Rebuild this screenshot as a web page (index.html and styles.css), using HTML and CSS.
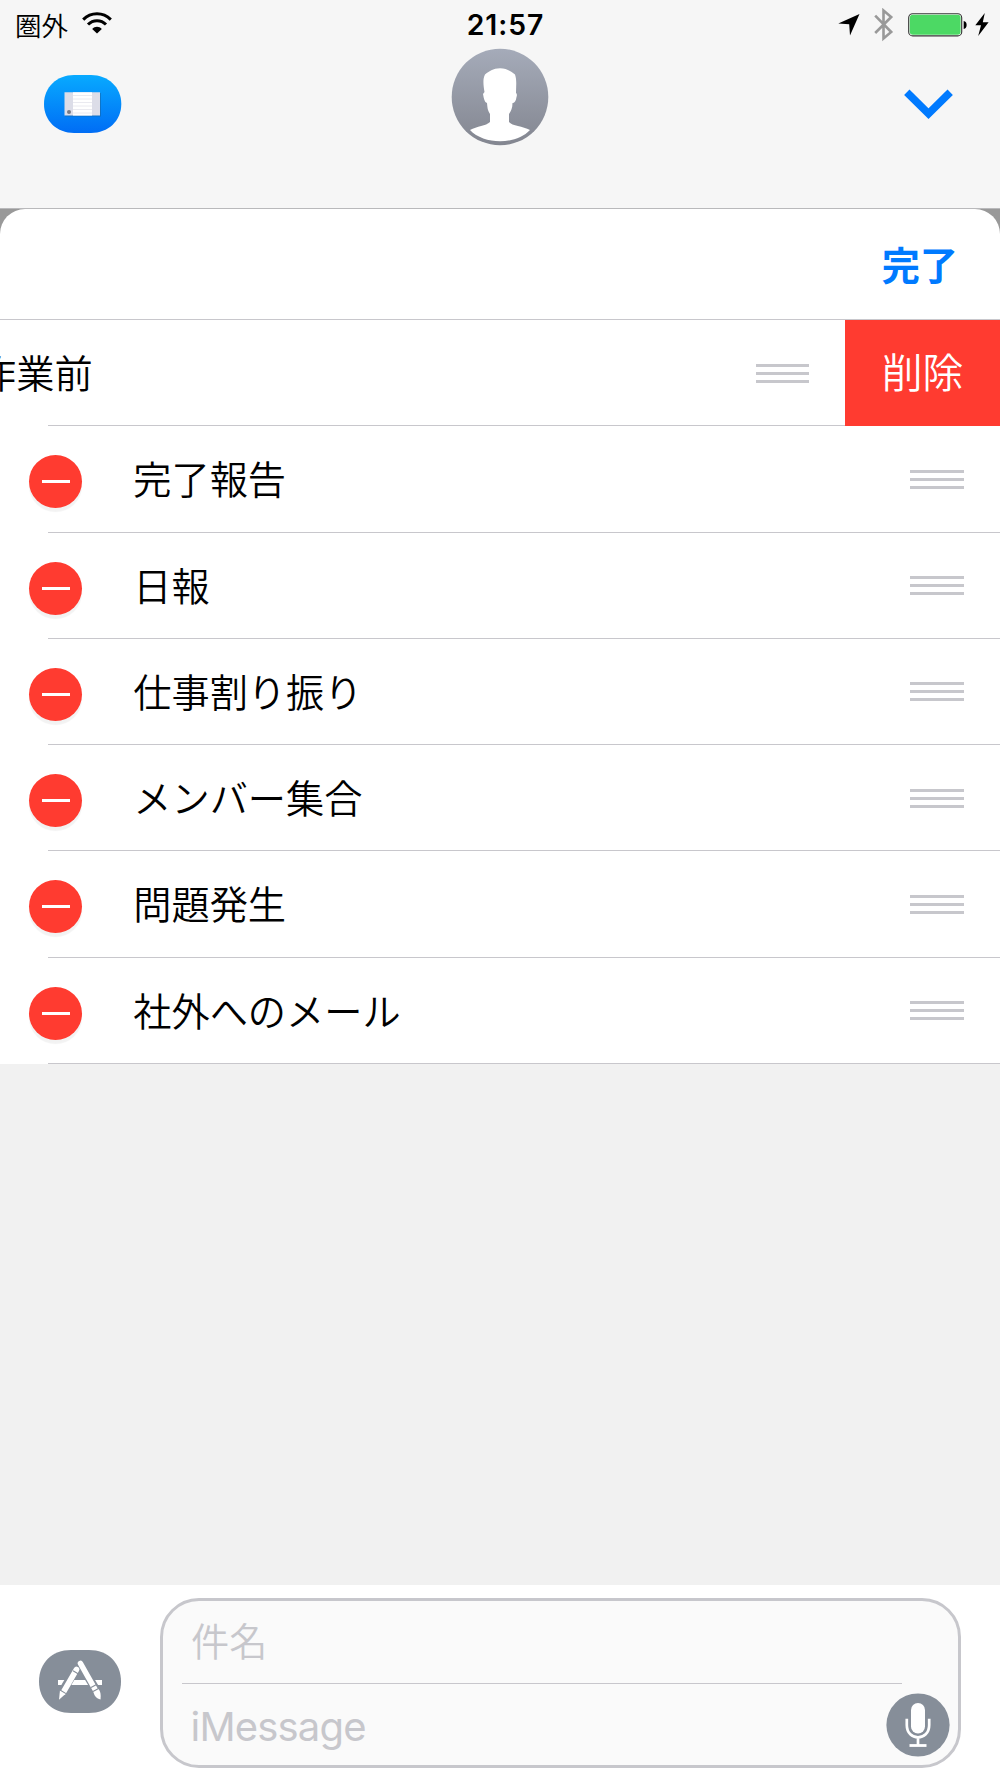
FILE: index.html
```html
<!DOCTYPE html>
<html lang="ja">
<head>
<meta charset="utf-8">
<title>iMessage</title>
<link rel="stylesheet" href="styles.css">
</head>
<body>
<div class="screen">
  <header class="top">
    <div class="status">
      <div class="status-left">
        <span class="carrier">圏外</span>
        <svg class="wifi" width="30" height="22" viewBox="0 0 30 22"><g fill="none" stroke="#000" stroke-width="3"><path d="M1.2 7.6C9-.2 21-.2 28.8 7.6"/><path d="M6 12.5C11 7.4 19 7.4 24 12.5"/></g><path d="M10.200 17C12.800 14.100 17.200 14.100 19.800 17L15 21.600Z"/></svg>
      </div>
      <span class="time">21:57</span>
      <div class="status-right">
        <svg class="location" width="22" height="22" viewBox="0 0 22 22"><path d="M21.500 0L.3 9.600 11.200 10.300 12 21.500Z"/></svg>
        <svg class="bluetooth" width="20" height="34" viewBox="0 0 20 34"><path d="M1.200 7.600L17.200 24 9.500 30.500V2.500L17.200 9 1.200 25" fill="none" stroke="#999" stroke-width="2.600"/></svg>
        <svg class="battery" width="59" height="24" viewBox="0 0 59 24"><rect x=".7" y=".7" width="53" height="22.200" rx="4" fill="#fff" stroke="#333" stroke-width="1.100"/><rect x="1.800" y="1.800" width="50.800" height="20" rx="3" fill="#4cd964"/><path d="M55.700 8C59.600 8.300 59.600 15.700 55.700 16Z"/></svg>
        <svg class="bolt" width="14" height="23" viewBox="0 0 14 23"><path d="M9.800 0L.3 12.300H6L3.200 23 13.600 9.200H7.800Z"/></svg>
      </div>
    </div>
    <div class="nav">
      <div class="app-pill">
        <svg width="78" height="58" viewBox="0 0 78 58"><defs><linearGradient id="blue" x2="0" y2="1"><stop stop-color="#08aaff"/><stop offset="1" stop-color="#006df5"/></linearGradient></defs><path d="M0 29C0 12 13 0 30 0H47C64 0 77.300 12 77.300 29S64 58 47 58H30C13 58 0 46 0 29Z" fill="url(#blue)"/><path d="M21 18H57V41.500H21Z" fill="#17629f" opacity=".55"/><path d="M20.500 17.300H56V40.500H20.500Z" fill="#dcdde8"/><path d="M29 17.300H48V40.500H29Z" fill="#fff"/><path d="M29 20.500H48M29 24H48M29 27.500H48M29 31H48M29 34.500H48M29 38H48" stroke="#eaeaf0"/><circle cx="25" cy="37" r="2" fill="#777a85"/></svg>
      </div>
      <svg class="avatar" width="98" height="98" viewBox="0 0 98 98"><defs><linearGradient id="grey" x2="0" y2="1"><stop stop-color="#a5abb9"/><stop offset="1" stop-color="#838690"/></linearGradient></defs><circle cx="49" cy="49" r="48.300" fill="url(#grey)"/><path d="M49 20.300C56 20.300 60 23.500 64 26.500C66 32 65 39 65 45Q66.500 46 65.500 49C65 53 63.500 55 61.500 55C61.500 60 60 63 58 66V74C61 78 72 78 79 82C65 97 33 97 19 82C26 78 35 78 39 74V66C36.500 62 36.500 60 36 55C33.500 54 33 51 32 46L33.500 44C32.500 38 31.500 31 34 26.500C38 23.500 42 20.300 49 20.300Z" fill="#fff"/></svg>
      <svg class="chevron" width="50" height="32" viewBox="0 0 50 32"><path d="M2.800 3.200L24.500 24.700 46.200 3.200" fill="none" stroke="#007aff" stroke-width="7.600"/></svg>
    </div>
  </header>

  <main class="stage">
    <section class="sheet">
      <div class="toolbar"><span class="done">完了</span></div>
      <div class="row swiped">
        <span class="label">作業前</span>
        <span class="grip"><i></i><i></i><i></i></span>
        <span class="delete"><span>削除</span></span>
      </div>
      <div class="row"><span class="minus"></span><span class="label">完了報告</span><span class="grip"><i></i><i></i><i></i></span></div>
      <div class="row"><span class="minus"></span><span class="label">日報</span><span class="grip"><i></i><i></i><i></i></span></div>
      <div class="row"><span class="minus"></span><span class="label">仕事割り振り</span><span class="grip"><i></i><i></i><i></i></span></div>
      <div class="row"><span class="minus"></span><span class="label">メンバー集合</span><span class="grip"><i></i><i></i><i></i></span></div>
      <div class="row"><span class="minus"></span><span class="label">問題発生</span><span class="grip"><i></i><i></i><i></i></span></div>
      <div class="row"><span class="minus"></span><span class="label">社外へのメール</span><span class="grip"><i></i><i></i><i></i></span></div>
    </section>
  </main>

  <footer class="composer">
    <svg class="apps" width="83" height="63" viewBox="0 0 83 63"><path d="M0 31.500C0 13 13 0 32 0H50C69 0 82 13 82 31.500S69 63 50 63H32C13 63 0 50 0 31.500Z" fill="#868e99"/><path d="M19 32.500H63" stroke="#fff" stroke-width="5.200"/><g stroke="#868e99" stroke-width="8.500"><path d="M38 17L22 44"/><path d="M41 13L60 45"/></g><g stroke="#fff" stroke-width="5.600"><path d="M37.500 19.500L24.500 42" stroke-linecap="round"/><path d="M41.500 13.500L57 41" stroke-linecap="round"/></g><path d="M21 40L27 43.500 20 49.800Z" fill="#fff"/><path d="M54.500 41.500L59.500 39C62 42 61.800 46 61.500 49.500C57.500 48.500 55 46 54.500 41.500Z" fill="#fff"/><path d="M34 20.800L39.500 24M21 40L27 43.600M52 37.500L58 34.200M54 41.500L60 38.200" stroke="#868e99" stroke-width="1.100"/></svg>
    <div class="field">
      <div class="subject">件名</div>
      <div class="message"><span>iMessage</span>
        <svg class="mic" width="64" height="64" viewBox="0 0 64 64"><circle cx="32" cy="32" r="31.600" fill="#868e99"/><rect x="25" y="10" width="14" height="30.500" rx="7" fill="#fff"/><path d="M20.800 25.800V32C20.800 48.500 43.200 48.500 43.200 32V25.800M32 44V53" fill="none" stroke="#fff" stroke-width="2.700"/><path d="M23.500 52.500H40.500" stroke="#fff" stroke-width="2.800"/></svg>
      </div>
    </div>
  </footer>
</div>
</body>
</html>
```
FILE: styles.css
```css
* { box-sizing: border-box; }
body { margin: 0; }
svg { display: block; flex: none; }

.screen {
  display: flex;
  flex-direction: column;
  width: 1000px;
  height: 1778px;
  overflow: hidden;
  background: #f1f1f1;
  color: #000;
  font-family: "Noto Sans CJK JP", sans-serif;
}

.top {
  height: 209px;
  flex: none;
  background: #f6f6f6;
  border-bottom: 1px solid #b9b9bb;
}

.status {
  display: grid;
  grid-template-columns: 1fr auto 1fr;
  align-items: center;
  height: 48px;
}
.status-left { display: flex; align-items: center; padding-left: 15px; }
.carrier { font-size: 26.5px; font-weight: 350; line-height: 44px; margin-top: 1px; }
.wifi { margin: -2px 0 0 14px; }
.time { font: 600 28.3px/44px Inter, sans-serif; letter-spacing: 1px; margin: 2px 0 0 11px; }
.status-right { display: flex; align-items: center; justify-content: flex-end; padding: 1px 11px 0 0; }
.bluetooth { margin-left: 14px; }
.battery { margin-left: 14px; }
.bolt { margin-left: 8px; }

.nav {
  display: grid;
  grid-template-columns: 1fr 98px 1fr;
  align-items: center;
  height: 98px;
}
.app-pill { padding: 13px 0 0 43.5px; }
.chevron { justify-self: end; margin: 15px 46.5px 0 0; }

.stage {
  flex: 1;
  background: linear-gradient(#999 60px, #f1f1f1 60px);
}
.sheet {
  border-radius: 25px 25px 0 0;
  background: #fff;
  overflow: hidden;
}
.toolbar {
  display: flex;
  justify-content: flex-end;
  align-items: center;
  height: 111px;
  padding: 0 42px 2px 0;
  border-bottom: 1px solid #c8c7cc;
}
.done { color: #007aff; font-size: 38.2px; font-weight: 600; }

.row {
  display: flex;
  align-items: center;
  height: 106.25px;
  padding: 0 36.5px 0 29px;
  background: linear-gradient(#c8c7cc, #c8c7cc) 48px 100% / 952px 1px no-repeat;
}
.label {
  flex: 1;
  padding-bottom: 2px;
  font-size: 38.2px;
  font-weight: 350;
  line-height: 56px;
  white-space: nowrap;
}
.minus {
  display: grid;
  place-items: center;
  width: 53px;
  height: 53px;
  margin: 5px 51.3px 0 0;
  border-radius: 50%;
  background: #ff3b30;
  box-shadow: 0 4px 1px rgba(0, 0, 0, .05);
}
.minus::before { content: ""; width: 28px; height: 3px; background: #fff; }
.grip { display: grid; gap: 5px; width: 53.5px; }
.grip i { height: 3px; background: #c7c7cc; }

.swiped { padding: 0; }
.swiped .label { margin-left: -22px; }
.delete {
  display: flex;
  align-items: center;
  justify-content: center;
  width: 155px;
  height: 106.25px;
  padding-bottom: 5px;
  margin-left: 36px;
  background: #ff3b30;
  color: #fff;
  font-size: 40.8px;
  font-weight: 350;
}

.composer {
  display: flex;
  flex: none;
  height: 193.5px;
  padding: 13.5px 39px 0;
  background: #fff;
}
.apps { margin: 52px 37.5px 0 0; }
.field {
  width: 802px;
  height: 170px;
  border: 3px solid #c7c7cc;
  border-radius: 39px;
  background: #fafafa;
  color: #c7c7cc;
}
.subject {
  height: 82.5px;
  width: 720px;
  margin-left: 19.5px;
  padding-left: 9px;
  border-bottom: 1px solid #c8c7cc;
  font-size: 38.2px;
  font-weight: 350;
  line-height: 78px;
}
.message {
  display: flex;
  justify-content: space-between;
  padding: 8px 8px 0 28px;
  font: 400 40px/70px Inter, sans-serif;
  letter-spacing: -.8px;
}
.mic { margin-top: 1px; }
```
